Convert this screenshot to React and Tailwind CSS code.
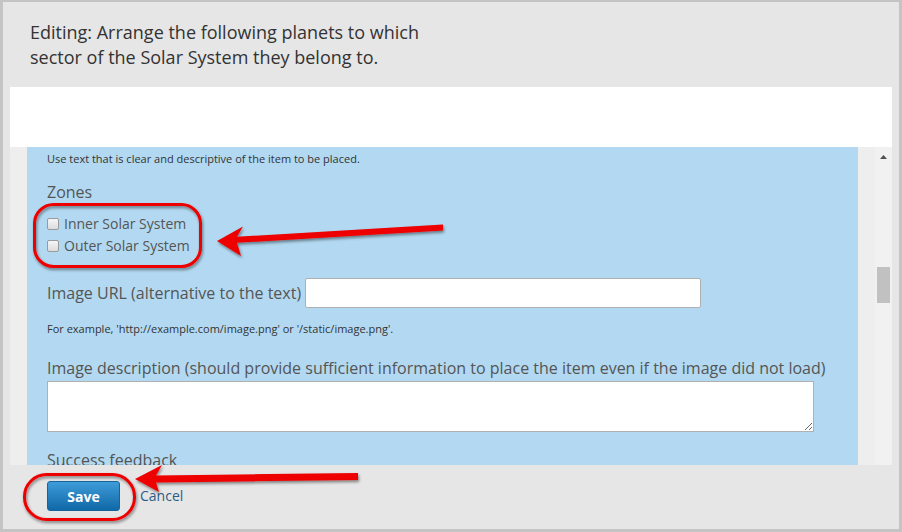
import React from 'react'

export default function App() {
  return (
    <div className="relative w-[902px] h-[532px] overflow-hidden bg-[#e6e6e6] border-[#c4c4c4] border-l-[3px] border-t-[2px] border-r-[3px] border-b-[3px] font-['Open_Sans',sans-serif] flex flex-col">
      {/* TITLE */}
      <div className="pl-[27px] pt-[18px] h-[85px] text-[18px] leading-[25px] text-[#333]">
        <p>Editing: Arrange the following planets to which</p>
        <p>sector of the Solar System they belong to.</p>
      </div>

      {/* PANEL */}
      <div className="mx-[7px] h-[378px] bg-white flex flex-col">
        <div className="h-[60px]" />
        <div className="flex h-[318px]">
          <div className="w-[17px] bg-[#eeeeee]" />
          <div className="w-[831px] bg-[#b2d9f1] overflow-hidden pl-[20px] pt-[4px] text-[#555]">
            <p className="text-[11px] leading-[16px] text-[#333]">
              Use text that is clear and descriptive of the item to be placed.
            </p>

            <p className="mt-[14px] text-[16px] leading-[22px]">Zones</p>

            <div className="mt-[10px]">
              <Check label="Inner Solar System" />
              <Check label="Outer Solar System" />
            </div>

            <div className="mt-[21px] flex items-center gap-[4px]">
              <span className="text-[16px] leading-[22px]">Image URL (alternative to the text)</span>
              <input className="w-[396px] h-[30px] bg-white border border-[#b0b0b0] rounded-[2px]" />
            </div>

            <p className="mt-[13px] text-[11px] leading-[16px] text-[#333]">
              For example, 'http://example.com/image.png' or '/static/image.png'.
            </p>

            <p className="mt-[20px] text-[16px] leading-[22px]">
              Image description (should provide sufficient information to place the item even if the image did not load)
            </p>
            <textarea className="mt-[2px] block w-[767px] h-[51px] bg-white border border-[#b0b0b0]" />

            <p className="mt-[17px] text-[16px] leading-[22px]">Success feedback</p>
          </div>
          <div className="w-[17px] bg-[#eeeeee]" />
          <div className="w-[17px] bg-[#f1f1f1] flex flex-col items-center">
            <svg width="17" height="17" viewBox="0 0 17 17" className="mt-[1px]">
              <polygon points="5,11 8.5,7 12,11" fill="#505050" />
            </svg>
            <div className="mt-[102px] w-[13px] h-[36px] bg-[#c1c1c1]" />
          </div>
        </div>
      </div>

      {/* FOOTER */}
      <div className="flex items-center gap-[20px] pl-[44px] pt-[16px]">
        <button className="w-[73px] h-[30px] rounded-[3px] border border-[#17649c] bg-gradient-to-b from-[#3d9cd9] to-[#0f68a7] text-white text-[14px] font-bold">
          Save
        </button>
        <a className="text-[14px] leading-[20px] text-[#2a5d86]">Cancel</a>
      </div>

      {/* ANNOTATIONS */}
      <svg className="absolute left-[-3px] top-[-2px] pointer-events-none" width="902" height="532" viewBox="0 0 902 532">
        <defs>
          <filter id="sh" x="-10%" y="-10%" width="120%" height="130%">
            <feDropShadow dx="1" dy="2" stdDeviation="1.5" floodColor="#000" floodOpacity="0.45" />
          </filter>
        </defs>
        <g filter="url(#sh)">
          <rect x="34.5" y="204.5" width="166" height="62" rx="19" fill="none" stroke="#ee0000" strokeWidth="3" />
          <polygon
            points="217,241 243,226.5 237,236.8 443,224.5 443,230.5 237,242.8 241,256"
            fill="#ee0000"
          />
          <rect x="24.5" y="474.5" width="110" height="45" rx="22" fill="none" stroke="#ee0000" strokeWidth="3" />
          <polygon
            points="135,479 162,465 156,475.5 358,473 358,480 156,482.5 159,492"
            fill="#ee0000"
          />
        </g>
      </svg>
    </div>
  )
}

function Check({ label }) {
  return (
    <div className="flex items-center h-[22px]">
      <span className="w-[12px] h-[12px] rounded-[2px] border border-[#9a9a9a] bg-gradient-to-b from-[#f6f6f6] to-[#dcdcdc]" />
      <span className="ml-[5px] text-[14px] leading-[22px]">{label}</span>
    </div>
  )
}
